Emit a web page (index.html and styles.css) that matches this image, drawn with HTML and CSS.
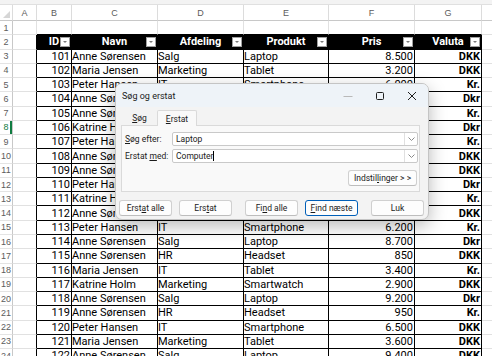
FILE: index.html
```html
<!DOCTYPE html>
<html lang="da">
<head>
    <meta charset="UTF-8">
    <meta name="viewport" content="width=device-width, initial-scale=1.0">
    <title>Søg og erstat</title>
    <link rel="stylesheet" href="styles.css">
</head>
<body>
    <div class="window">
        <div class="topstrip"></div>
        <table class="sheet">
            <colgroup>
                <col class="w-rh"><col class="w-a"><col class="w-b"><col class="w-c"><col class="w-d">
                <col class="w-e"><col class="w-f"><col class="w-g"><col class="w-h">
            </colgroup>
            <thead>
                <tr class="letters">
                    <th class="corner"></th><th>A</th><th>B</th><th>C</th><th>D</th><th>E</th><th>F</th><th>G</th><th></th>
                </tr>
            </thead>
            <tbody>
                <tr class="top"><th>1</th><td></td><td></td><td></td><td></td><td></td><td></td><td></td><td></td></tr>
                <tr class="t head"><th>2</th><td></td>
                    <td>ID<i class="filter"></i></td>
                    <td>Navn<i class="filter"></i></td>
                    <td>Afdeling<i class="filter"></i></td>
                    <td>Produkt<i class="filter"></i></td>
                    <td>Pris<i class="filter"></i></td>
                    <td>Valuta<i class="filter"></i></td>
                    <td></td></tr>
                <tr class="t"><th>3</th><td></td><td>101</td><td>Anne Sørensen</td><td>Salg</td><td>Laptop</td><td>8.500</td><td>DKK</td><td></td></tr>
                <tr class="t"><th>4</th><td></td><td>102</td><td>Maria Jensen</td><td>Marketing</td><td>Tablet</td><td>3.200</td><td>DKK</td><td></td></tr>
                <tr class="t"><th>5</th><td></td><td>103</td><td>Peter Hansen</td><td>IT</td><td>Smartphone</td><td>6.000</td><td>Kr.</td><td></td></tr>
                <tr class="t"><th>6</th><td></td><td>104</td><td>Anne Sørensen</td><td>Salg</td><td>Laptop</td><td>8.900</td><td>Dkr</td><td></td></tr>
                <tr class="t"><th>7</th><td></td><td>105</td><td>Anne Sørensen</td><td>HR</td><td>Headset</td><td>900</td><td>Kr.</td><td></td></tr>
                <tr class="t"><th class="active">8</th><td></td><td>106</td><td>Katrine Holm</td><td>Marketing</td><td>Smartwatch</td><td>2.800</td><td>Dkr</td><td></td></tr>
                <tr class="t"><th>9</th><td></td><td>107</td><td>Peter Hansen</td><td>IT</td><td>Smartphone</td><td>6.100</td><td>Kr.</td><td></td></tr>
                <tr class="t"><th>10</th><td></td><td>108</td><td>Anne Sørensen</td><td>Salg</td><td>Laptop</td><td>8.600</td><td>DKK</td><td></td></tr>
                <tr class="t"><th>11</th><td></td><td>109</td><td>Anne Sørensen</td><td>HR</td><td>Headset</td><td>800</td><td>DKK</td><td></td></tr>
                <tr class="t"><th>12</th><td></td><td>110</td><td>Peter Hansen</td><td>IT</td><td>Tablet</td><td>3.300</td><td>Dkr</td><td></td></tr>
                <tr class="t"><th>13</th><td></td><td>111</td><td>Katrine Holm</td><td>Marketing</td><td>Smartwatch</td><td>2.700</td><td>Kr.</td><td></td></tr>
                <tr class="t"><th>14</th><td></td><td>112</td><td>Anne Sørensen</td><td>Salg</td><td>Laptop</td><td>9.000</td><td>DKK</td><td></td></tr>
                <tr class="t"><th>15</th><td></td><td>113</td><td>Peter Hansen</td><td>IT</td><td>Smartphone</td><td>6.200</td><td>Kr.</td><td></td></tr>
                <tr class="t"><th>16</th><td></td><td>114</td><td>Anne Sørensen</td><td>Salg</td><td>Laptop</td><td>8.700</td><td>Dkr</td><td></td></tr>
                <tr class="t"><th>17</th><td></td><td>115</td><td>Anne Sørensen</td><td>HR</td><td>Headset</td><td>850</td><td>DKK</td><td></td></tr>
                <tr class="t"><th>18</th><td></td><td>116</td><td>Maria Jensen</td><td>IT</td><td>Tablet</td><td>3.400</td><td>Kr.</td><td></td></tr>
                <tr class="t"><th>19</th><td></td><td>117</td><td>Katrine Holm</td><td>Marketing</td><td>Smartwatch</td><td>2.900</td><td>DKK</td><td></td></tr>
                <tr class="t"><th>20</th><td></td><td>118</td><td>Anne Sørensen</td><td>Salg</td><td>Laptop</td><td>9.200</td><td>Dkr</td><td></td></tr>
                <tr class="t"><th>21</th><td></td><td>119</td><td>Anne Sørensen</td><td>HR</td><td>Headset</td><td>950</td><td>Kr.</td><td></td></tr>
                <tr class="t"><th>22</th><td></td><td>120</td><td>Peter Hansen</td><td>IT</td><td>Smartphone</td><td>6.500</td><td>DKK</td><td></td></tr>
                <tr class="t"><th>23</th><td></td><td>121</td><td>Maria Jensen</td><td>Marketing</td><td>Tablet</td><td>3.600</td><td>DKK</td><td></td></tr>
                <tr class="t"><th>24</th><td></td><td>122</td><td>Anne Sørensen</td><td>Salg</td><td>Laptop</td><td>9.400</td><td>DKK</td><td></td></tr>
            </tbody>
        </table>

        <div class="dialog">
            <div class="titlebar">
                <span class="title">Søg og erstat</span>
                <div class="winbtns">
                    <span class="winbtn">
                        <svg width="10" height="10" viewBox="0 0 10 10"><path d="M0.5 5.5h9" stroke="#b9b9b9" stroke-width="1"/></svg>
                    </span>
                    <span class="winbtn">
                        <svg width="10" height="10" viewBox="0 0 10 10"><rect x="1.5" y="1.5" width="7" height="7" rx="1" fill="none" stroke="#1f1f1f" stroke-width="1"/></svg>
                    </span>
                    <span class="winbtn">
                        <svg width="10" height="10" viewBox="0 0 10 10"><path d="M1 1l8 8M9 1l-8 8" stroke="#1f1f1f" stroke-width="1"/></svg>
                    </span>
                </div>
            </div>
            <div class="tabs">
                <span class="tab"><u>S</u>øg</span>
                <span class="tab selected"><u>E</u>rstat</span>
            </div>
            <div class="panel">
                <div class="field">
                    <label><u>S</u>øg efter:</label>
                    <div class="combo"><span class="value">Laptop</span><span class="drop"><svg width="7" height="4" viewBox="0 0 7 4"><path d="M0.5 0.5l3 3 3-3" fill="none" stroke="#8a8a8a"/></svg></span></div>
                </div>
                <div class="field">
                    <label>Erstat <u>m</u>ed:</label>
                    <div class="combo"><span class="value">Computer<i class="caret"></i></span><span class="drop"><svg width="7" height="4" viewBox="0 0 7 4"><path d="M0.5 0.5l3 3 3-3" fill="none" stroke="#8a8a8a"/></svg></span></div>
                </div>
                <div class="options">
                    <span class="btn wide">Indstil<u>l</u>inger &gt; &gt;</span>
                </div>
            </div>
            <div class="actions">
                <span class="btn">Erst<u>a</u>t alle</span>
                <span class="btn">Ers<u>t</u>at</span>
                <span class="btn group">Fi<u>n</u>d alle</span>
                <span class="btn default"><u>F</u>ind næste</span>
                <span class="btn group">Luk</span>
            </div>
        </div>
    </div>
</body>
</html>
```

FILE: styles.css
```css
body {
    margin: 0;
    background: #fff;
    font-family: "Liberation Sans Narrow", Roboto, "Liberation Sans", sans-serif;
    overflow: hidden;
}
.window {
    position: relative;
    width: 492px;
    height: 356px;
    overflow: hidden;
}
.topstrip {
    height: 4px;
    background: #f3f3f3;
    border-bottom: 1px solid #e0e0e0;
}

/* sheet */
.sheet {
    border-collapse: separate;
    border-spacing: 0;
    table-layout: fixed;
    width: 500px;
}
.w-rh { width: 13px; }
.w-a { width: 24px; }
.w-b { width: 35px; }
.w-c { width: 86px; }
.w-d { width: 86px; }
.w-e { width: 85px; }
.w-f { width: 86px; }
.w-g { width: 67px; }
.w-h { width: 18px; }

.sheet th,
.sheet td {
    padding: 0;
    white-space: nowrap;
    overflow: hidden;
}
.letters {
    height: 16px;
}
.letters th {
    font-family: "Liberation Sans", Arial, sans-serif;
    font-size: 9px;
    font-weight: normal;
    color: #5c5c5c;
    border-right: 1px solid #dcdcdc;
    border-bottom: 1px solid #c8c8c8;
}
.letters .corner {
    position: relative;
}
.letters .corner::after {
    content: "";
    position: absolute;
    right: 2px;
    bottom: 2px;
    border-left: 7px solid transparent;
    border-bottom: 7px solid #d6d6d6;
}
tbody tr {
    height: 14.27px;
}
tbody th {
    font-family: "Liberation Sans", Arial, sans-serif;
    font-size: 9px;
    font-weight: normal;
    color: #5c5c5c;
    text-align: center;
    border-right: 1px solid #c8c8c8;
    border-bottom: 1px solid #e4e4e4;
}
tbody th.active {
    color: #107c41;
    box-shadow: inset -2px 0 #107c41;
}
tbody td {
    font-size: 11px;
    line-height: 13px;
    color: #000;
    padding: 0 2px 0 3px;
    border-right: 1px solid #e1e1e1;
    border-bottom: 1px solid #e1e1e1;
}
.top td:nth-child(n+3):nth-child(-n+8) {
    border-bottom-color: #000;
}
.t td:nth-child(2) {
    border-right-color: #000;
}
.t td:nth-child(n+3):nth-child(-n+8) {
    border-right-color: #000;
    border-bottom-color: #000;
}
.t td:nth-child(3),
.t td:nth-child(7),
.t td:nth-child(8) {
    text-align: right;
    padding: 0 1px 0 2px;
}
.t td:nth-child(8) {
    font-weight: bold;
}
.head td:nth-child(n+3):nth-child(-n+8) {
    position: relative;
    background: #000;
    color: #fff;
    font-weight: bold;
    text-align: center;
    padding: 0;
}
.filter {
    position: absolute;
    right: 1px;
    top: 2px;
    width: 8px;
    height: 8px;
    background: #fff;
    border: 1px solid #a0a0a0;
}
.filter::after {
    content: "";
    position: absolute;
    left: 2px;
    top: 3px;
    border-left: 2px solid transparent;
    border-right: 2px solid transparent;
    border-top: 2px solid #7a7a7a;
}

/* dialog */
.dialog {
    position: absolute;
    left: 115px;
    top: 83px;
    width: 314px;
    height: 137px;
    box-sizing: border-box;
    display: flex;
    flex-direction: column;
    background: #f3f3f3;
    border: 1px solid #c4c4c4;
    border-radius: 7px;
    box-shadow: 0 6px 18px rgba(0, 0, 0, 0.28);
    overflow: hidden;
    font-family: Roboto, "Noto Sans", sans-serif;
    font-size: 8.5px;
    color: #1b1b1b;
}
.titlebar {
    height: 23px;
    display: flex;
    align-items: center;
    padding-left: 6px;
    background: #eef3f8;
}
.title {
    font-size: 9px;
}
.winbtns {
    margin-left: auto;
    display: flex;
}
.winbtn {
    width: 32px;
    height: 23px;
    display: flex;
    align-items: center;
    justify-content: center;
}
.tabs {
    height: 18px;
    display: flex;
    align-items: flex-end;
    padding-left: 6px;
}
.tab {
    height: 15px;
    box-sizing: border-box;
    display: flex;
    align-items: center;
    justify-content: center;
    width: 35px;
}
.tab.selected {
    width: 40px;
    background: #f9f9f9;
    border: 1px solid #dadada;
    border-bottom: none;
    border-radius: 2px 2px 0 0;
    margin-bottom: -1px;
    position: relative;
    height: 16px;
}
.panel {
    height: 67px;
    box-sizing: border-box;
    margin: 0 8px 0 5px;
    padding: 6px 1px 0 3px;
    background: #f9f9f9;
    border: 1px solid #dadada;
    display: flex;
    flex-direction: column;
    gap: 3px;
}
.field {
    display: flex;
    align-items: center;
}
.field label {
    width: 47px;
    white-space: nowrap;
}
.combo {
    flex: 1;
    height: 14px;
    box-sizing: border-box;
    display: flex;
    background: #fff;
    border: 1px solid #c9c9c9;
    border-radius: 2px;
}
.combo .value {
    flex: 1;
    padding-left: 3px;
    line-height: 12px;
}
.caret {
    display: inline-block;
    width: 1px;
    height: 10px;
    background: #000;
    vertical-align: -2px;
}
.combo .drop {
    width: 12px;
    border-left: 1px solid #e0e0e0;
    display: flex;
    align-items: center;
    justify-content: center;
}
.options {
    display: flex;
    justify-content: flex-end;
    margin-top: 4px;
    padding-right: 1px;
}
.btn {
    width: 53px;
    height: 16px;
    box-sizing: border-box;
    display: flex;
    align-items: center;
    justify-content: center;
    background: #fdfdfd;
    border: 1px solid #d0d0d0;
    border-bottom-color: #bdbdbd;
    border-radius: 3px;
}
.btn.wide {
    width: 69px;
}
.btn.default {
    border: 1px solid #005fb8;
}
.actions {
    display: flex;
    gap: 7px;
    margin-top: 8px;
    padding: 0 3px;
}
.actions .group {
    margin-left: 6px;
}
```
